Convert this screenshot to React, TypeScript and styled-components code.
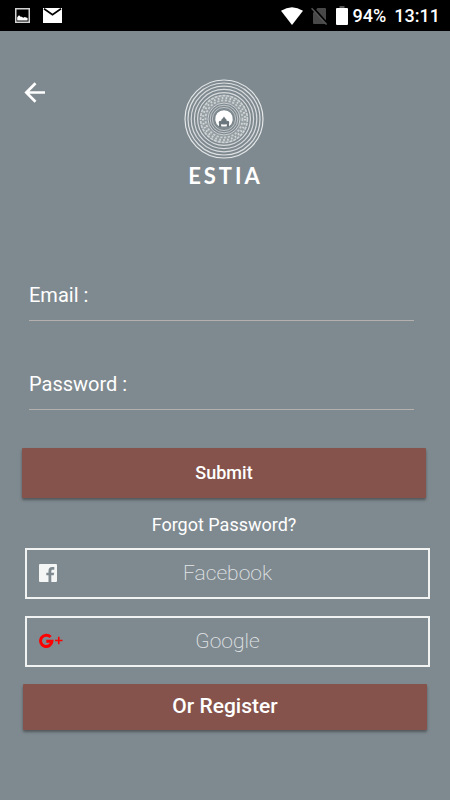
import React from "react";
import styled, { createGlobalStyle } from "styled-components";

const white = "#ffffff";
const slate = "#7f8a90";
const brick = "#85534b";

const GlobalStyle = createGlobalStyle`
  *, *::before, *::after { box-sizing: border-box; }
  body {
    margin: 0;
    background: ${slate};
    color: ${white};
    font-family: Roboto, "Liberation Sans", sans-serif;
  }
  button, input { font: inherit; color: inherit; }
`;

const Screen = styled.div`
  min-height: 100vh;
  display: flex;
  flex-direction: column;
`;

const StatusBar = styled.div`
  height: 31px;
  padding: 0 10px 0 15px;
  background: #000;
  display: flex;
  align-items: center;
  justify-content: space-between;
  font-size: 18px;
  font-weight: 500;
  line-height: 31px;
`;

const StatusGroup = styled.div<{ $gap: number }>`
  display: flex;
  align-items: center;
  gap: ${(p) => p.$gap}px;
`;

const Header = styled.header`
  display: grid;
  grid-template-columns: 1fr auto 1fr;
  align-items: start;
  padding: 48px 25px 0 23px;
`;

const BackButton = styled.button`
  justify-self: start;
  display: flex;
  padding: 0;
  border: 0;
  background: none;
  cursor: pointer;
`;

const Brand = styled.div`
  display: flex;
  flex-direction: column;
  align-items: center;
`;

const Wordmark = styled.h1`
  display: flex;
  gap: 3px;
  margin: 4px 0 0;
  font-family: Lato, sans-serif;
  font-size: 22px;
  font-weight: 700;
  line-height: 26px;
`;

const Form = styled.form`
  display: flex;
  flex-direction: column;
  margin-top: 84px;
  padding: 0 24px 0 22px;
`;

const Field = styled.div`
  display: flex;
  align-items: center;
  gap: 8px;
  height: 48px;
  margin: 0 12px 41px 7px;
  padding-bottom: 4px;
  border-bottom: 1px solid #b3b0ae;
  font-size: 20px;
  line-height: 24px;

  &:last-of-type {
    margin-bottom: 38px;
  }
`;

const FieldInput = styled.input`
  flex: 1;
  min-width: 0;
  padding: 0;
  border: 0;
  outline: 0;
  background: transparent;
`;

const RaisedButton = styled.button<{ $height: number; $size: number }>`
  width: 100%;
  height: ${(p) => p.$height}px;
  padding: 0 0 2px;
  border: 0;
  border-radius: 1px;
  background: ${brick};
  box-shadow: 0 2px 3px rgba(0, 0, 0, 0.38);
  font-size: ${(p) => p.$size}px;
  font-weight: 500;
  cursor: pointer;
`;

const ForgotLink = styled.a`
  align-self: center;
  margin: 15px 0 11px;
  color: ${white};
  font-size: 18px;
  line-height: 24px;
  text-decoration: none;
`;

const SocialList = styled.div`
  display: flex;
  flex-direction: column;
  gap: 17px;
  padding: 0 20px 0 25px;
`;

const SocialButton = styled.button`
  display: grid;
  grid-template-columns: 30px 1fr 30px;
  align-items: center;
  height: 51px;
  padding: 0 12px 2px;
  border: 2px solid #f1f3f3;
  background: none;
  color: #e3e6e8;
  font-size: 21px;
  font-weight: 200;
  cursor: pointer;
`;

const RegisterRow = styled.div`
  padding: 17px 23px 24px;
`;

const Page = styled.main`
  display: flex;
  flex-direction: column;
`;

const GalleryIcon = () => (
  <svg width="15" height="15" viewBox="0 0 15 15" aria-hidden="true">
    <rect x="0.75" y="0.75" width="13.5" height="13.5" fill="none" stroke="#d2d2d2" strokeWidth="1.5" />
    <path d="M2.2 12.6V9.2L4 7.2l1.6 1.6h1.2l1.4 1 1.6-.8 2.8 1v2.6Z" fill="#fff" />
  </svg>
);

const MailIcon = () => (
  <svg width="19" height="15" viewBox="0 0 19 15" aria-hidden="true">
    <path d="M0 0h19v15H0Z" fill="#fff" />
    <path d="M1 .8 9.5 6.8 18 .8" fill="none" stroke="#000" strokeWidth="1.7" />
  </svg>
);

const WifiIcon = () => (
  <svg width="22" height="18" viewBox="0 0 22 18" aria-hidden="true">
    <path d="M0 3.8Q11-3.4 22 3.8L11 18Z" fill="#fff" />
  </svg>
);

const NoSimIcon = () => (
  <svg width="17" height="18" viewBox="0 0 17 18" aria-hidden="true">
    <path d="M6.5 1H14a1 1 0 0 1 1 1v14a1 1 0 0 1-1 1H3a1 1 0 0 1-1-1V6Z" fill="#484848" />
    <path d="m1.8.2 14.8 16.6" stroke="#000" strokeWidth="2" />
    <path d="m.6 1.2 15 16.4" stroke="#555" strokeWidth="1.5" />
  </svg>
);

const BatteryIcon = () => (
  <svg width="12" height="19" viewBox="0 0 12 19" aria-hidden="true">
    <path d="M3.5 0h5v2h-5Z" fill="#555" />
    <path d="M1 2h10a1 1 0 0 1 1 1v15a1 1 0 0 1-1 1H1a1 1 0 0 1-1-1V3a1 1 0 0 1 1-1Z" fill="#fff" />
  </svg>
);

const BackIcon = () => (
  <svg width="24" height="26" viewBox="0 0 24 26" aria-hidden="true">
    <path d="M22 13.5H4M12.5 4.3 3.3 13.5l9.2 9.2" fill="none" stroke="#fff" strokeWidth="2.7" />
  </svg>
);

const rings = [
  { r: 39, w: 1.2, o: 0.8 },
  { r: 36, w: 1.2, o: 0.75 },
  { r: 32.8, w: 1.2, o: 0.7 },
  { r: 29.6, w: 1.2, o: 0.7 },
  { r: 26.4, w: 1.2, o: 0.7 },
  { r: 16, w: 0.9, o: 0.7 },
  { r: 13.8, w: 0.9, o: 0.6 },
  { r: 11.6, w: 0.9, o: 0.55 },
];

const Emblem = () => (
  <svg width="80" height="80" viewBox="-40 -40 80 80" role="img" aria-label="Estia emblem">
    <g fill="none" stroke="#fff">
      {rings.map((ring) => (
        <circle key={ring.r} r={ring.r} strokeWidth={ring.w} strokeOpacity={ring.o} />
      ))}
      <circle r="20.5" strokeWidth="8" strokeOpacity="0.18" />
      <circle r="23.4" strokeWidth="1.6" strokeDasharray="3 1" strokeOpacity="0.55" />
      <circle r="21" strokeWidth="2" strokeDasharray="1.6 2.4" strokeOpacity="0.6" />
      <circle r="18.5" strokeWidth="1.8" strokeDasharray="2.2 1.6" strokeOpacity="0.5" />
    </g>
    <path d="M-5 7.2A8.800 8.800 0 1 1 5 7.200Z" fill="#fff" />
    <path
      d="M-5 8V5C-6 1.600-3.600 1-2.800 2.200-2.900-.4-1 0 0-2.800 1 0 2.900-.4 2.800 2.200 3.600 1 6 1.600 5 5V8Z"
      fill="#6c777d"
    />
    <path d="M-2.600 7.400C-3.600 5-1.800 4.200-1.400 5.600H1.400C1.800 4.200 3.600 5 2.600 7.400Z" fill="#fff" />
  </svg>
);

const FacebookIcon = () => (
  <svg width="18" height="18" viewBox="0 0 18 18" aria-hidden="true">
    <path
      fill="#f4f5f5"
      fillRule="evenodd"
      d="M1 0h16a1 1 0 0 1 1 1v16a1 1 0 0 1-1 1h-4.7v-6.7h2.4l.5-2.6h-2.9V7.2c0-1 .4-1.5 1.5-1.5h1.5V3.1h-2.2C10.700 3.100 9.500 4.600 9.500 6.900V8.700H7.300v2.600h2.200V18H1a1 1 0 0 1-1-1V1a1 1 0 0 1 1-1Z"
    />
  </svg>
);

const GooglePlusIcon = () => (
  <svg width="24" height="16" viewBox="0 0 24 16" aria-hidden="true">
    <g fill="none" stroke="#ff0000">
      <path d="M11.6 4.1A5.700 5.700 0 1 0 13 8.200H7.300" strokeWidth="3" />
      <path d="M16 7.500h7.500M19.750 3.750v7.500" strokeWidth="1.6" />
    </g>
  </svg>
);

const fields = [
  { id: "email", label: "Email :", type: "email" },
  { id: "password", label: "Password :", type: "password" },
];

const socials = [
  { name: "Facebook", icon: <FacebookIcon /> },
  { name: "Google", icon: <GooglePlusIcon /> },
];

export default function App() {
  return (
    <Screen>
      <GlobalStyle />
      <StatusBar>
        <StatusGroup $gap={13}>
          <GalleryIcon />
          <MailIcon />
        </StatusGroup>
        <StatusGroup $gap={8}>
          <StatusGroup $gap={8}>
            <WifiIcon />
            <NoSimIcon />
          </StatusGroup>
          <StatusGroup $gap={5}>
            <BatteryIcon />
            <span>94%</span>
          </StatusGroup>
          <time>13:11</time>
        </StatusGroup>
      </StatusBar>
      <Page>
        <Header>
          <BackButton type="button" aria-label="Back">
            <BackIcon />
          </BackButton>
          <Brand>
            <Emblem />
            <Wordmark aria-label="ESTIA">
              {["E", "S", "T", "I", "A"].map((letter) => (
                <span key={letter}>{letter}</span>
              ))}
            </Wordmark>
          </Brand>
        </Header>
        <Form onSubmit={(e) => e.preventDefault()}>
          {fields.map((f) => (
            <Field key={f.id}>
              <label htmlFor={f.id}>{f.label}</label>
              <FieldInput id={f.id} name={f.id} type={f.type} />
            </Field>
          ))}
          <RaisedButton type="submit" $height={50} $size={18}>
            Submit
          </RaisedButton>
          <ForgotLink href="#forgot">Forgot Password?</ForgotLink>
        </Form>
        <SocialList>
          {socials.map((s) => (
            <SocialButton key={s.name} type="button">
              {s.icon}
              <span>{s.name}</span>
            </SocialButton>
          ))}
        </SocialList>
        <RegisterRow>
          <RaisedButton type="button" $height={46} $size={21}>
            Or Register
          </RaisedButton>
        </RegisterRow>
      </Page>
    </Screen>
  );
}
